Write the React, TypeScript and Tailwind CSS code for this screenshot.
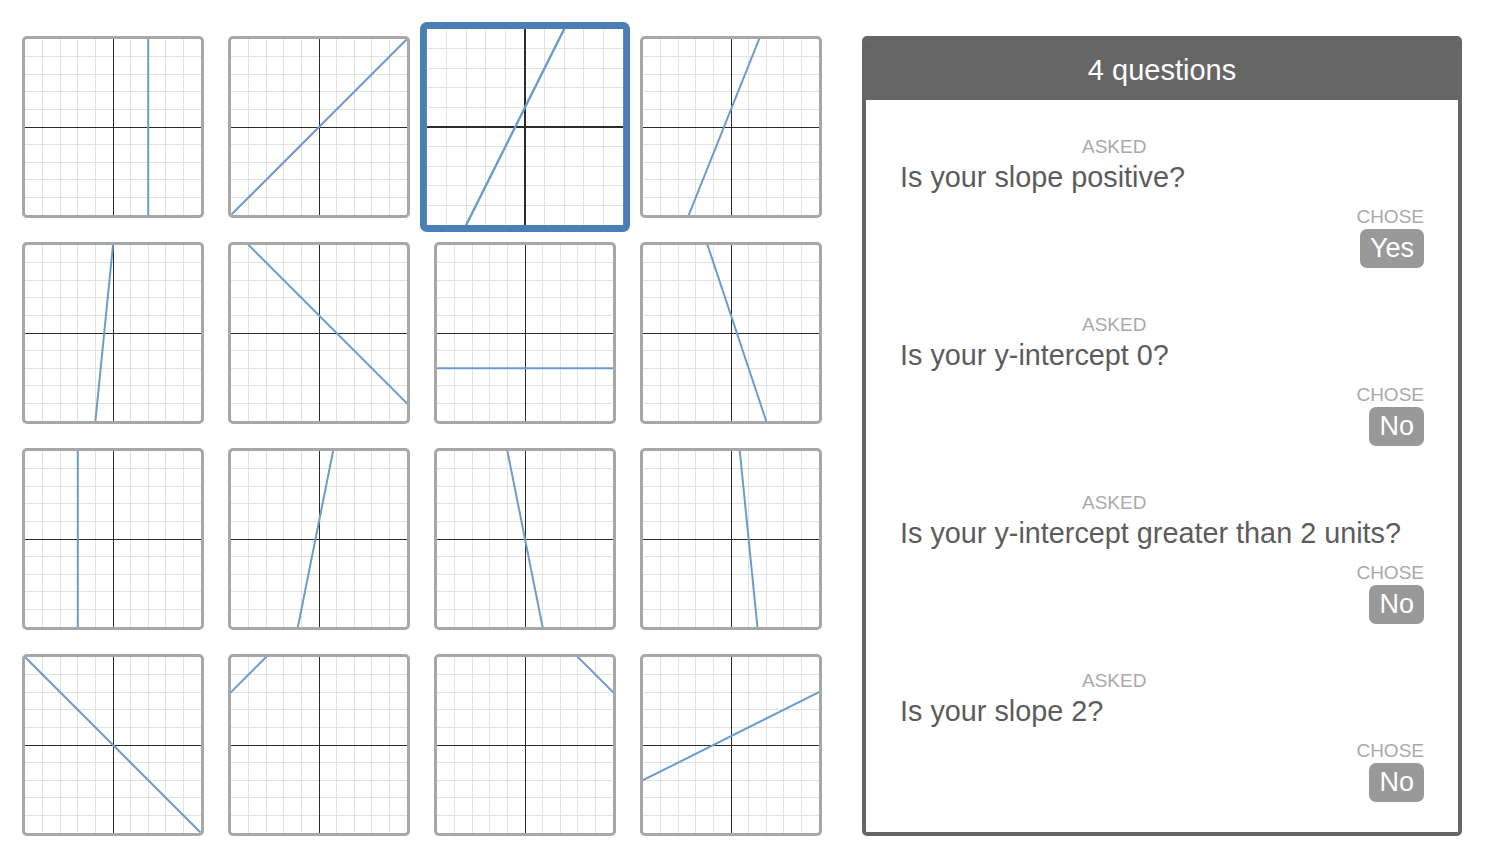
import React from "react";

type Line = { x?: number; m?: number; b?: number };

const graphs: Line[] = [
  { x: 2 },
  { m: 1, b: 0 },
  { m: 2, b: 1 },
  { m: 2.5, b: 1 },
  { m: 10, b: 5 },
  { m: -1, b: 1 },
  { m: 0, b: -2 },
  { m: -3, b: 1 },
  { x: -2 },
  { m: 5, b: 1 },
  { m: -5, b: 0 },
  { m: -10, b: 10 },
  { m: -1, b: 0 },
  { m: 1, b: 8 },
  { m: -1, b: 8 },
  { m: 0.5, b: 0.5 },
];

const selected = 2;

const questions = [
  { q: "Is your slope positive?", a: "Yes" },
  { q: "Is your y-intercept 0?", a: "No" },
  { q: "Is your y-intercept greater than 2 units?", a: "No" },
  { q: "Is your slope 2?", a: "No" },
];

const ticks = [-4, -3, -2, -1, 1, 2, 3, 4];

const Graph = ({ line }: { line: Line }) => {
  let x1: number, y1: number, x2: number, y2: number;
  if (line.x !== undefined) {
    x1 = line.x;
    x2 = line.x;
    y1 = -6;
    y2 = 6;
  } else {
    const m = line.m ?? 0;
    const b = line.b ?? 0;
    x1 = -6;
    x2 = 6;
    y1 = m * -6 + b;
    y2 = m * 6 + b;
  }

  return (
    <svg viewBox="-5 -5 10 10" className="block h-full w-full">
      <g shapeRendering="crispEdges">
        {ticks.map((t) => (
          <line key={"v" + t} x1={t} y1={-5} x2={t} y2={5} stroke="#e2e2e2" strokeWidth={1} vectorEffect="non-scaling-stroke" />
        ))}
        {ticks.map((t) => (
          <line key={"h" + t} x1={-5} y1={t} x2={5} y2={t} stroke="#e2e2e2" strokeWidth={1} vectorEffect="non-scaling-stroke" />
        ))}
        <line x1={0} y1={-5} x2={0} y2={5} stroke="#2b2b2b" strokeWidth={1} vectorEffect="non-scaling-stroke" />
        <line x1={-5} y1={0} x2={5} y2={0} stroke="#2b2b2b" strokeWidth={1} vectorEffect="non-scaling-stroke" />
      </g>
      <line x1={x1} y1={-y1} x2={x2} y2={-y2} stroke="#6c9bcd" strokeWidth={2} vectorEffect="non-scaling-stroke" />
    </svg>
  );
};

const App = () => {
  return (
    <div className="flex min-h-screen bg-white pl-[22px] pt-[36px] font-['Liberation_Sans',Arial,sans-serif]">
      {/* graph choices */}
      <div className="grid grid-cols-[repeat(4,182px)] gap-[24px] self-start">
        {graphs.map((g, i) => (
          <div
            key={i}
            className={
              i === selected
                ? "relative z-10 h-[182px] w-[182px] scale-[1.154] overflow-hidden rounded-[6px] border-[6px] border-[#4a7fb6] bg-white"
                : "h-[182px] w-[182px] overflow-hidden rounded-[5px] border-[3px] border-[#a7a7a7] bg-white"
            }
          >
            <Graph line={g} />
          </div>
        ))}
      </div>

      {/* questions log */}
      <div className="ml-[40px] flex h-[800px] w-[600px] flex-col overflow-hidden rounded-[5px] border-4 border-[#666666] bg-white">
        <div className="flex h-[60px] shrink-0 items-center justify-center bg-[#666666] text-[29px] leading-none text-white">
          4 questions
        </div>
        <div className="flex flex-col gap-[47px] px-[34px] pt-[37px]">
          {questions.map((item, i) => (
            <div key={i} className="flex flex-col">
              <div className="ml-[182px] text-[19px] leading-[20px] text-[#a9a9a9]">ASKED</div>
              <div className="mt-[4px] text-[28.8px] leading-[32px] text-[#5c5c5c]">{item.q}</div>
              <div className="mt-[14px] text-right text-[19px] leading-[20px] text-[#a9a9a9]">CHOSE</div>
              <div className="mt-[2px] flex justify-end">
                <span className="rounded-[7px] bg-[#999999] px-[10px] text-[27px] leading-[39px] text-white">
                  {item.a}
                </span>
              </div>
            </div>
          ))}
        </div>
      </div>
    </div>
  );
};

export default App;
